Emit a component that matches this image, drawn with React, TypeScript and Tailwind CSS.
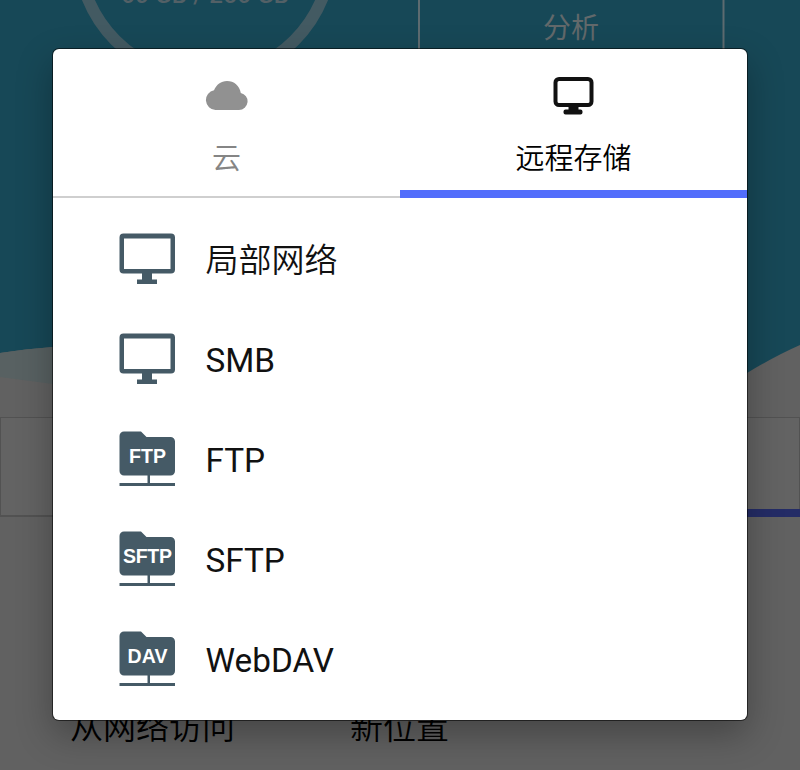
import React from "react";

const cjk = "font-['Roboto','Noto_Sans_CJK_SC',sans-serif]";

function Monitor() {
  return (
    <svg width="57" height="52" viewBox="0 0 57 52" fill="#455a66">
      <path transform="translate(0.5 0.5)" fillRule="evenodd" d="M4 0H51.500a4 4 0 0 1 4 4V36a4 4 0 0 1-4 4H32.500V46H37.500V50.500H17.500V46H22.500V40H4a4 4 0 0 1-4-4V4a4 4 0 0 1 4-4ZM4.500 5V35.500H51V5Z" />
    </svg>
  );
}

function Folder({ label, size }: { label: string; size: string }) {
  return (
    <svg width="57" height="56" viewBox="0 0 57 56" fill="#455a66">
      <path transform="translate(0.5 0.5)" d="M4.500 0H21.500L27 5.500H51a4.500 4.500 0 0 1 4.500 4.500V39.500a4.500 4.500 0 0 1-4.500 4.500H30.500V51.500H55.500V54.500H0V51.500H28V44H4.500a4.500 4.500 0 0 1-4.500-4.500V4.500a4.500 4.500 0 0 1 4.500-4.500Z" />
      <text x="28.5" y="32" textAnchor="middle" textLength={size} fill="#fff" className="font-['Liberation_Sans',sans-serif] text-[19.5px] font-bold">
        {label}
      </text>
    </svg>
  );
}

function Backdrop() {
  return (
    <div className="flex h-[770px] flex-col">
      <div className="grid h-[417px] bg-[#616161]">
        <svg width="800" height="417" viewBox="0 0 800 417" fill="none">
          <path d="M0 0H800V345Q775 356 747 373L600 417L53 347Q25 349 0 353Z" fill="#174857" />
          <path d="M0 353Q25 349 53 347L300 380V417L53 384L0 377Z" fill="#586162" />
          <circle cx="205" cy="-49" r="126.5" stroke="#435a62" strokeWidth="12" />
          <text x="205" y="3" textAnchor="middle" textLength="168" fill="#536066" className="font-['Roboto',sans-serif] text-[24px] font-medium">
            60 GB / 256 GB
          </text>
          <path d="M419 0V60M723.5 0V60" stroke="#5d6b70" strokeWidth="2" />
          <text x="571" y="38" textAnchor="middle" fill="#62696b" className="font-['Noto_Sans_CJK_SC',sans-serif] text-[28px]">
            分析
          </text>
        </svg>
      </div>
      <div className="flex h-[100px] border border-b-2 border-[#525252] bg-[#636363]">
        <div className="mt-auto -mr-px -mb-0.5 ml-auto h-2 w-[400px] bg-[#242c66]" />
      </div>
      <div className="flex grow items-end bg-[#616161] pb-5 pl-[70px] text-[33px] leading-[44px] font-[350] text-black">
        <div className={`w-[280px] ${cjk}`}>从网络访问</div>
        <div className={cjk}>新位置</div>
      </div>
    </div>
  );
}

const latin = "text-[33.3px] font-normal";

const rows = [
  { name: "局部网络", style: "text-[33px] font-[350]", icon: <Monitor /> },
  { name: "SMB", style: latin, icon: <Monitor /> },
  { name: "FTP", style: latin, icon: <Folder label="FTP" size="37" /> },
  { name: "SFTP", style: latin, icon: <Folder label="SFTP" size="49" /> },
  { name: "WebDAV", style: latin, icon: <Folder label="DAV" size="40" /> },
];

export default function App() {
  return (
    <div className={`relative h-[770px] w-[800px] overflow-hidden ${cjk}`}>
      <Backdrop />
      <div className="absolute top-[49px] left-[53px] h-[671px] w-[694px] overflow-hidden rounded-[6px] bg-white font-[350] shadow-[0_0_0_1px_rgba(0,0,0,0.55),0_14px_36px_rgba(0,0,0,0.3)]">
        <div className="flex h-[149px]">
          <div className="flex w-[347px] flex-col items-center border-b-2 border-[#cfcfcf] pt-8 text-[#858585]">
            <svg width="43" height="29" viewBox="0 0 43 29" fill="#919191">
              <path transform="translate(0.5 0)" d="M10 29A10 10 0 0 1 8.500 9.200C11 3.700 15.500 0 21.500 0C28.500 0 34 4.500 35.300 12A8.600 8.600 0 0 1 33.500 29Z" />
            </svg>
            <div className="mt-[29px] text-[29px] leading-[40px]">云</div>
          </div>
          <div className="flex w-[347px] flex-col items-center border-b-8 border-[#526dfb] pt-7 text-black">
            <svg width="41" height="38" viewBox="0 0 41 38">
              <rect x="2.5" y="2" width="36" height="26" rx="3.5" fill="none" stroke="#111" strokeWidth="4" />
              <path d="M15.500 29H25.500V32.500H27.500a2 2 0 0 1 2 2V35.500a2 2 0 0 1-2 2H12.500a2 2 0 0 1-2-2V34.500a2 2 0 0 1 2-2H15.500Z" fill="#111" />
            </svg>
            <div className="mt-6 text-[29px] leading-[40px]">远程存储</div>
          </div>
        </div>
        <div className="pt-[11px]">
          {rows.map((r) => (
            <div key={r.name} className="flex h-[100px] items-center pl-[66px]">
              <div className="w-[86.5px]">{r.icon}</div>
              <div className={`pt-[3px] leading-[44px] text-[#111] ${r.style}`}>{r.name}</div>
            </div>
          ))}
        </div>
      </div>
    </div>
  );
}
